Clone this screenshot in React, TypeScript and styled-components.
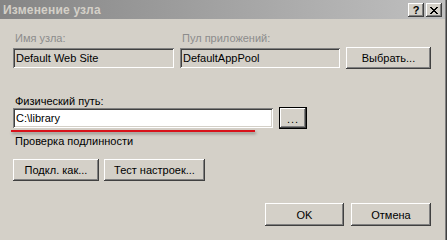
import React from 'react';
import styled, { createGlobalStyle, css } from 'styled-components';

const GlobalStyle = createGlobalStyle`
  html, body {
    margin: 0;
    padding: 0;
    background: #d4d0c8;
  }
  body {
    font-family: "Liberation Sans", Arial, sans-serif;
    font-size: 11px;
    color: #000;
  }
`;

const raised = css`
  box-shadow: inset -1px -1px 0 #404040, inset 1px 1px 0 #ffffff,
    inset -2px -2px 0 #808080;
`;

const sunken = css`
  box-shadow: inset 1px 1px 0 #808080, inset -1px -1px 0 #ffffff,
    inset 2px 2px 0 #404040, inset -2px -2px 0 #d4d0c8;
`;

const Window = styled.div`
  width: 445px;
  height: 240px;
  border-right: 1px solid #808080;
  box-shadow: 1px 0 0 #404040;
  background: #d4d0c8;
  display: flex;
  flex-direction: column;
`;

const TitleBar = styled.div`
  height: 19px;
  display: flex;
  align-items: center;
  justify-content: space-between;
  padding: 0 3px 0 3px;
  background: linear-gradient(to right, #858585, #c0c0c0);
`;

const Title = styled.span`
  font-weight: bold;
  font-size: 12px;
  color: #d4d0c8;
  letter-spacing: 0.2px;
`;

const TitleButtons = styled.div`
  display: flex;
  gap: 2px;
  margin-top: 1px;
`;

const CaptionButton = styled.div`
  width: 16px;
  height: 14px;
  background: #d4d0c8;
  ${raised};
  display: flex;
  align-items: center;
  justify-content: center;
  font-weight: bold;
  font-size: 11px;
  line-height: 14px;
`;

const Body = styled.div`
  padding: 13px 14px 0 13px;
  display: flex;
  flex-direction: column;
`;

const TopRow = styled.div`
  display: flex;
  align-items: flex-end;
`;

const Column = styled.div<{ $w: number; $gap: number }>`
  width: ${(p) => p.$w}px;
  margin-right: ${(p) => p.$gap}px;
  display: flex;
  flex-direction: column;
`;

const Label = styled.div<{ $disabled?: boolean }>`
  height: 13px;
  line-height: 13px;
  padding-left: 2px;
  margin-bottom: 3px;
  color: ${(p) => (p.$disabled ? '#8c8c8c' : '#000')};
`;

const Field = styled.div<{ $readOnly?: boolean; $w?: number }>`
  box-sizing: border-box;
  height: 20px;
  ${(p) => (p.$w ? `width: ${p.$w}px;` : '')}
  background: ${(p) => (p.$readOnly ? '#d4d0c8' : '#ffffff')};
  ${sunken};
  padding: 0 3px;
  line-height: 20px;
  white-space: nowrap;
`;

const Button = styled.div<{ $w: number; $h?: number }>`
  box-sizing: border-box;
  width: ${(p) => p.$w}px;
  height: ${(p) => p.$h ?? 22}px;
  background: #d4d0c8;
  ${raised};
  display: flex;
  align-items: center;
  justify-content: center;
`;

const DefaultButton = styled(Button)`
  box-shadow: inset 0 0 0 1px #000, inset -2px -2px 0 #404040,
    inset 2px 2px 0 #ffffff, inset -3px -3px 0 #808080;
`;

const Dots = styled.span`
  letter-spacing: 1px;
  margin-top: 2px;
`;

const PathSection = styled.div`
  margin-top: 27px;
  display: flex;
  flex-direction: column;
`;

const PathRow = styled.div`
  display: flex;
  align-items: center;
  gap: 6px;
  margin-top: -4px;
`;

const Underlined = styled.div`
  position: relative;

  &::after {
    content: '';
    position: absolute;
    left: -2px;
    top: 22px;
    width: 244px;
    height: 2px;
    background: #d8121a;
    box-shadow: 1px 2px 3px rgba(0, 0, 0, 0.35);
  }
`;

const Auth = styled.div`
  margin-top: 6px;
  padding-left: 2px;
  height: 13px;
  line-height: 13px;
`;

const ButtonRow = styled.div<{ $justify?: string; $gap: number; $top: number }>`
  display: flex;
  justify-content: ${(p) => p.$justify ?? 'flex-start'};
  gap: ${(p) => p.$gap}px;
  margin-top: ${(p) => p.$top}px;
`;

const CloseIcon = () => (
  <svg width="8" height="7" viewBox="0 0 8 7" shapeRendering="crispEdges">
    <path
      d="M0 0h2v1H0zM6 0h2v1H6zM1 1h2v1H1zM5 1h2v1H5zM2 2h4v1H2zM3 3h2v1H3zM2 4h4v1H2zM1 5h2v1H1zM5 5h2v1H5zM0 6h2v1H0zM6 6h2v1H6z"
      fill="#000"
    />
  </svg>
);

export default function App() {
  return (
    <>
      <GlobalStyle />
      <Window>
        <TitleBar>
          <Title>Изменение узла</Title>
          <TitleButtons>
            <CaptionButton>?</CaptionButton>
            <CaptionButton>
              <CloseIcon />
            </CaptionButton>
          </TitleButtons>
        </TitleBar>
        <Body>
          <TopRow>
            <Column $w={161} $gap={6}>
              <Label $disabled>Имя узла:</Label>
              <Field $readOnly>Default Web Site</Field>
            </Column>
            <Column $w={160} $gap={6}>
              <Label $disabled>Пул приложений:</Label>
              <Field $readOnly>DefaultAppPool</Field>
            </Column>
            <Button $w={85} style={{ marginBottom: -1 }}>
              Выбрать...
            </Button>
          </TopRow>
          <PathSection>
            <Label>Физический путь:</Label>
            <PathRow>
              <Underlined>
                <Field $w={260}>C:\library</Field>
              </Underlined>
              <DefaultButton $w={28}>
                <Dots>...</Dots>
              </DefaultButton>
            </PathRow>
          </PathSection>
          <Auth>Проверка подлинности</Auth>
          <ButtonRow $gap={5} $top={11}>
            <Button $w={86}>Подкл. как...</Button>
            <Button $w={101}>Тест настроек...</Button>
          </ButtonRow>
          <ButtonRow $justify="flex-end" $gap={7} $top={22}>
            <Button $w={79} $h={23}>
              OK
            </Button>
            <Button $w={80} $h={23}>
              Отмена
            </Button>
          </ButtonRow>
        </Body>
      </Window>
    </>
  );
}
